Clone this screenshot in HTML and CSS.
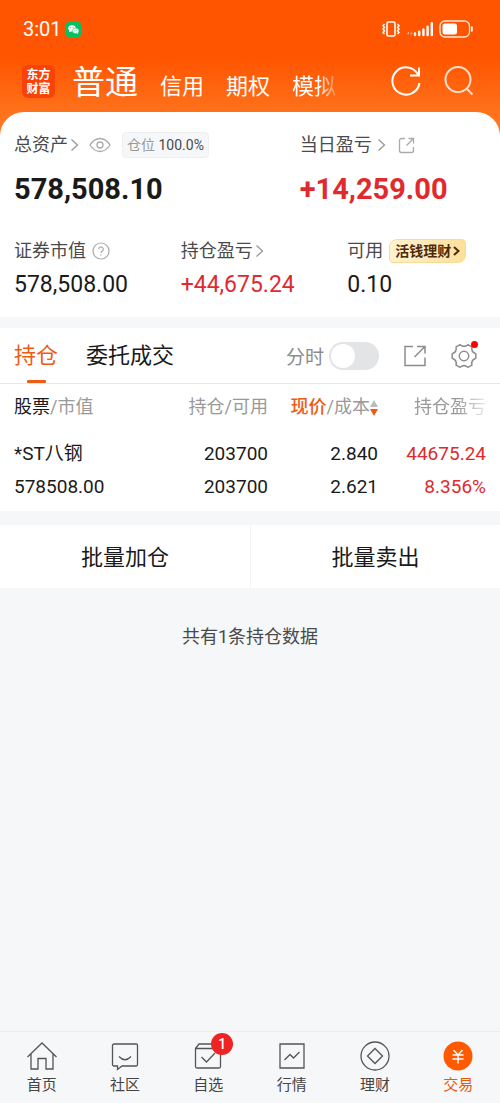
FILE: index.html
```html
<!DOCTYPE html>
<html lang="zh-CN">
<head>
    <meta charset="UTF-8">
    <meta name="viewport" content="width=device-width, initial-scale=1.0">
    <title>交易 - 持仓</title>
    <link rel="stylesheet" href="styles.css">
</head>
<body>

<header class="header">
    <div class="status-bar">
        <span class="time">3:01</span>
        <svg class="wechat" width="15" height="15" viewBox="0 0 15 15">
            <rect width="15" height="15" rx="3" fill="#07c160"/>
            <ellipse cx="6" cy="6.3" rx="3.7" ry="3.1" fill="#fff"/>
            <path d="M3.5 8l-.4 2.2 2.3-1z" fill="#fff"/>
            <ellipse cx="9.6" cy="8.8" rx="3.3" ry="2.7" fill="#fff" stroke="#07c160" stroke-width=".5"/>
            <path d="M10.5 11l1.6.9-.2-1.7z" fill="#fff"/>
            <g fill="#07c160"><circle cx="4.8" cy="5.6" r=".5"/><circle cx="7.2" cy="5.6" r=".5"/><circle cx="8.6" cy="8.2" r=".4"/><circle cx="10.7" cy="8.2" r=".4"/></g>
        </svg>
        <div class="status-icons">
            <svg width="20" height="18" viewBox="0 0 20 18" fill="none" stroke="#fff">
                <rect x="6" y="2" width="8" height="14" rx="1.5" stroke-width="1.6"/>
                <path d="M3.5 4l-1.5 1.7 1.5 1.7L2 9l1.5 1.7L2 12.4l1.5 1.7M16.5 4L18 5.7l-1.5 1.7L18 9l-1.5 1.7 1.5 1.7-1.5 1.7" stroke-width="1.5"/>
            </svg>
            <svg width="28" height="18" viewBox="0 0 28 18" fill="none" stroke="#fff" stroke-width="2.4" stroke-linecap="round">
                <path d="M2.5 14V12.5M2.5 12.5L1 14M5 12v2.5L6.2 13" stroke-width=".8" opacity=".5"/>
                <path d="M9 15v-1.5M13.2 15v-3.2M17.4 15V9.4M21.6 15V6.6M25.8 15V3.2"/>
            </svg>
            <svg width="34" height="18" viewBox="0 0 34 18" fill="none">
                <rect x="1" y="1" width="29.5" height="16" rx="5" stroke="#fff" stroke-width="1.3" opacity=".85"/>
                <rect x="3.5" y="3.5" width="14.5" height="11" rx="2.5" fill="#fff"/>
                <path d="M32.8 7.2v3.6" stroke="#fff" stroke-width="1.8" stroke-linecap="round"/>
            </svg>
        </div>
    </div>
    <div class="nav-row">
        <a class="logo" href="#">东方<br>财富</a>
        <nav class="account-nav">
            <a class="current" href="#">普通</a>
            <a href="#">信用</a>
            <a href="#">期权</a>
            <a class="fade" href="#">模拟</a>
        </nav>
        <button class="icon-btn" type="button" aria-label="刷新">
            <svg width="30" height="30" viewBox="0 0 30 30" fill="none" stroke="#fff" stroke-width="2">
                <path d="M28.450 17A13.600 13.600 0 1 1 27 8.600"/>
                <path d="M28 1.500V9.500H19"/>
            </svg>
        </button>
        <button class="icon-btn" type="button" aria-label="搜索">
            <svg width="30" height="30" viewBox="0 0 30 30" fill="none" stroke="#ffe3d0" stroke-width="2">
                <circle cx="14" cy="13.500" r="12.500"/>
                <path d="M22.500 22.500L28.500 28.500"/>
            </svg>
        </button>
    </div>
</header>

<main class="content">
    <section class="assets">
        <div class="asset-top">
            <div class="asset">
                <div class="label">
                    <a href="#">总资产</a>
                    <svg class="chevron" width="9" height="14" viewBox="0 0 9 14"><path d="M1.500 1.500L7.500 7l-6 5.500"/></svg>
                    <svg class="eye" width="22" height="16" viewBox="0 0 22 16" fill="none" stroke="#aaa" stroke-width="1.300">
                        <path d="M1 8C4 3.500 7 1.500 11 1.500S18 3.500 21 8c-3 4.500-6 6.500-10 6.500S4 12.500 1 8z"/>
                        <circle cx="11" cy="8" r="3"/>
                    </svg>
                    <span class="position-tag">仓位 <b>100.0%</b></span>
                </div>
                <div class="total">578,508.10</div>
            </div>
            <div class="asset">
                <div class="label">
                    <a href="#">当日盈亏</a>
                    <svg class="chevron day" width="9" height="14" viewBox="0 0 9 14"><path d="M1.500 1.500L7.500 7l-6 5.500"/></svg>
                    <svg class="share-small" width="17" height="17" viewBox="0 0 17 17" fill="none" stroke="#aaa" stroke-width="1.300">
                        <path d="M7 1.500H3.500a2 2 0 0 0-2 2v10a2 2 0 0 0 2 2h10a2 2 0 0 0 2-2V10M10.500 1.500h5v5M15.500 1.500L8.500 8.500"/>
                    </svg>
                </div>
                <div class="total up">+14,259.00</div>
            </div>
        </div>
        <div class="asset-bottom">
            <div class="asset">
                <div class="label">
                    <span>证券市值</span>
                    <svg class="help" width="18" height="18" viewBox="0 0 18 18" fill="none" stroke="#aaa" stroke-width="1.200">
                        <circle cx="9" cy="9" r="8"/>
                        <path d="M6.700 7.200a2.300 2.300 0 1 1 3.600 1.900C9.400 9.700 9 10 9 11M9 12.300v1.300"/>
                    </svg>
                </div>
                <div class="amount">578,508.00</div>
            </div>
            <div class="asset">
                <div class="label">
                    <a href="#">持仓盈亏</a>
                    <svg class="chevron" width="9" height="14" viewBox="0 0 9 14"><path d="M1.500 1.500L7.500 7l-6 5.500"/></svg>
                </div>
                <div class="amount up">+44,675.24</div>
            </div>
            <div class="asset">
                <div class="label">
                    <span>可用</span>
                    <a class="promo" href="#">活钱理财<svg width="7" height="10" viewBox="0 0 7 10" fill="none" stroke="#4d2a0c" stroke-width="2"><path d="M1 1l4.500 4L1 9"/></svg></a>
                </div>
                <div class="amount">0.10</div>
            </div>
        </div>
    </section>

    <section class="holdings">
        <div class="toolbar">
            <a class="tab active" href="#">持仓</a>
            <a class="tab" href="#">委托成交</a>
            <label class="switch-label" for="minute">分时</label>
            <input class="switch" type="checkbox" id="minute">
            <button class="icon-btn share" type="button" aria-label="分享">
                <svg width="22" height="22" viewBox="0 0 22 22" fill="none" stroke="#8c8c8c" stroke-width="1.500">
                    <path d="M9 1.500H1v19h20V12.500M13 1.500h8v7M21 1.500L10.500 12"/>
                </svg>
            </button>
            <button class="icon-btn settings" type="button" aria-label="设置">
                <svg width="26" height="26" viewBox="0 0 26 26" fill="none" stroke="#8c8c8c" stroke-width="1.500" stroke-linejoin="round">
                    <path d="M24.800 10.700V15.300Q19.900 17 20.900 22.100L16.900 24.300Q13 21 9.100 24.300L5.100 22.100Q6.100 17 1.200 15.300V10.700Q6.100 9 5.100 3.900L9.100 1.700Q13 5 16.900 1.700L20.900 3.900Q19.900 9 24.800 10.700z"/>
                    <circle cx="13" cy="13" r="4.700"/>
                </svg>
                <span class="dot"></span>
            </button>
        </div>

        <table class="stocks">
            <thead>
                <tr>
                    <th><span class="strong">股票</span>/市值</th>
                    <th>持仓/可用</th>
                    <th><span class="sorted">现价</span>/成本<svg class="sort" width="8" height="16" viewBox="0 0 8 16"><path d="M4 0l4 7H0z" fill="#bbb"/><path d="M4 16L0 9h8z" fill="#f05a14"/></svg></th>
                    <th><span class="fade">持仓盈亏</span></th>
                </tr>
            </thead>
            <tbody>
                <tr>
                    <td>*ST八钢<br>578508.00</td>
                    <td>203700<br>203700</td>
                    <td>2.840<br>2.621</td>
                    <td class="up">44675.24<br>8.356%</td>
                </tr>
            </tbody>
        </table>
    </section>

    <div class="batch">
        <button type="button">批量加仓</button>
        <button type="button">批量卖出</button>
    </div>

    <p class="summary">共有1条持仓数据</p>
</main>

<nav class="tabbar">
    <a href="#">
        <svg width="32" height="30" viewBox="0 0 32 30">
            <path d="M1.500 16L16 2l14.500 14M5 13v15h7V17.500h8V28h7V13"/>
        </svg>
        首页
    </a>
    <a href="#">
        <svg width="32" height="30" viewBox="0 0 32 30">
            <path d="M5 3h22a1.500 1.500 0 0 1 1.500 1.500v19A1.500 1.500 0 0 1 27 25H13l-4.500 3.500V25H5a1.500 1.500 0 0 1-1.500-1.500v-19A1.500 1.500 0 0 1 5 3zM10 15.500q6 6.500 12 0"/>
        </svg>
        社区
    </a>
    <a href="#">
        <svg width="32" height="30" viewBox="0 0 32 30">
            <path d="M3.500 7.500h25v18a1.500 1.500 0 0 1-1.500 1.500H5a1.500 1.500 0 0 1-1.500-1.500zM3.500 7.500L7 3h18l3.500 4.500M9.500 16l5 5 8.500-9"/>
        </svg>
        自选
        <span class="badge">1</span>
    </a>
    <a href="#">
        <svg width="32" height="30" viewBox="0 0 32 30">
            <path d="M4 3h24v24H4zM8.500 19l5.500-5.500 3.500 3.500 6-6"/>
        </svg>
        行情
    </a>
    <a href="#">
        <svg width="32" height="30" viewBox="0 0 32 30">
            <circle cx="16" cy="15" r="14"/>
            <path d="M16 7.500l7.500 7.500-7.500 7.500L8.500 15z"/>
        </svg>
        理财
    </a>
    <a class="active" href="#">
        <svg width="32" height="30" viewBox="0 0 32 30">
            <circle class="disc" cx="16" cy="15" r="14.500"/>
            <path class="yen" d="M11.500 9l4.500 5 4.500-5M10.500 14h11M10.500 18h11M16 14v8.500"/>
        </svg>
        交易
    </a>
</nav>

</body>
</html>
```
FILE: styles.css
```css
* {
    box-sizing: border-box;
}

body {
    margin: 0;
    min-height: 100vh;
    display: flex;
    flex-direction: column;
    background-color: #f6f7f9;
    color: #1a1a1a;
    font-family: Roboto, "Noto Sans CJK SC", sans-serif;
    font-size: 18px;
}

a {
    color: inherit;
    text-decoration: none;
}

button {
    font: inherit;
    color: inherit;
    border: 0;
    padding: 0;
    background: none;
}

svg {
    display: block;
    flex: none;
}

.up {
    color: #e02a2e;
}

.fade {
    -webkit-mask-image: linear-gradient(to right, #000 60%, transparent 110%);
    mask-image: linear-gradient(to right, #000 60%, transparent 110%);
}

/* header */
.header {
    padding-bottom: 32px;
    background: linear-gradient(#ff5500 40%, #ff7a24 90%);
    color: #fff;
}

.status-bar {
    display: flex;
    align-items: center;
    height: 58px;
    padding: 0 27px 0 23px;
}

.time {
    font-size: 20px;
}

.wechat {
    margin-left: 4px;
}

.status-icons {
    display: flex;
    align-items: center;
    gap: 5px;
    margin-left: auto;
}

.nav-row {
    display: flex;
    align-items: center;
    height: 46px;
    margin-bottom: 8px;
    padding: 0 26px 0 22px;
    gap: 23px;
}

.logo {
    width: 33px;
    height: 33px;
    padding-top: 3px;
    border-radius: 6px;
    background-color: #f9420a;
    font-size: 12px;
    font-weight: bold;
    line-height: 14px;
    text-align: center;
}

.account-nav {
    display: flex;
    align-items: baseline;
    gap: 22px;
    flex: 1;
    margin-left: -6px;
    padding-top: 8px;
    font-size: 22px;
    line-height: 46px;
}

.account-nav .current {
    font-size: 33px;
}

.icon-btn {
    position: relative;
    flex: none;
}

/* assets card, overlaps the end of the header */
.content {
    margin-top: -32px;
}

.assets {
    padding: 20px 0 15px;
    border-radius: 24px 24px 0 0;
    background-color: #fff;
}

.asset-top {
    display: grid;
    grid-template-columns: 4fr 3fr;
    margin-bottom: 31px;
}

.asset-bottom {
    display: grid;
    grid-template-columns: repeat(3, 1fr);
}

.asset {
    padding-left: 14px;
}

.label {
    display: flex;
    align-items: center;
    height: 26px;
    color: #4a4a4a;
    line-height: 26px;
    white-space: nowrap;
}

.chevron {
    margin-left: 2px;
    fill: none;
    stroke: #999;
    stroke-width: 1.3;
}

.chevron.day {
    margin-left: 5px;
}

.eye {
    margin-left: 10px;
}

.help {
    margin-left: 6px;
}

.share-small {
    margin-left: 12px;
}

.position-tag {
    margin-left: 11px;
    padding: 0 4px;
    border: 1px solid #eeeff1;
    border-radius: 4px;
    background-color: #f6f7f9;
    color: #999;
    font-size: 14px;
    line-height: 24px;
}

.position-tag b {
    color: #4a4a4a;
    font-weight: normal;
}

.promo {
    display: flex;
    align-items: center;
    gap: 2px;
    height: 24px;
    margin-left: 6px;
    padding: 0 5px;
    border: 1px solid #f7dc95;
    border-radius: 8px 4px;
    background: linear-gradient(to right, #fff3d0, #fce09a);
    color: #4d2a0c;
    font-size: 14px;
    font-weight: bold;
}

.total {
    margin-top: 13px;
    font-size: 29px;
    font-weight: bold;
    line-height: 36px;
}

.amount {
    margin-top: 4px;
    font-size: 23px;
    line-height: 34px;
}

/* holdings */
.holdings {
    margin-top: 11px;
    padding-bottom: 8px;
    background-color: #fff;
}

.toolbar {
    display: flex;
    align-items: center;
    height: 56px;
    padding: 0 23px 0 14px;
    border-bottom: 1px solid #e8e8ea;
}

.tab {
    display: flex;
    flex-direction: column;
    align-items: center;
    margin-right: 28px;
    font-size: 22px;
    line-height: 55px;
}

.tab.active {
    color: #ee5c14;
}

.tab.active::after {
    content: "";
    width: 19px;
    height: 3px;
    margin-top: -3px;
    border-radius: 1px;
    background-color: #ee5c14;
}

.switch-label {
    margin-left: auto;
    color: #8c8c8c;
    font-size: 19px;
}

.switch {
    appearance: none;
    width: 50px;
    height: 28px;
    margin: 0 25px 0 5px;
    padding: 2px;
    border-radius: 14px;
    background-color: #e3e4e6;
}

.switch::before {
    content: "";
    display: block;
    width: 24px;
    height: 24px;
    border-radius: 50%;
    background-color: #fff;
}

.switch:checked {
    background-color: #ee5c14;
}

.switch:checked::before {
    margin-left: auto;
}

.settings {
    margin-left: 25px;
}

.dot {
    position: absolute;
    top: -2px;
    right: -1px;
    width: 7px;
    height: 7px;
    border-radius: 50%;
    background-color: #f00;
}

.stocks {
    width: 100%;
    border-collapse: collapse;
    table-layout: fixed;
}

.stocks th, .stocks td {
    padding: 0 2px 0 0;
    text-align: right;
    white-space: nowrap;
}

.stocks th {
    height: 46px;
    padding-bottom: 4px;
    color: #999;
    font-weight: normal;
}

.stocks td {
    padding-top: 7px;
    font-size: 19px;
    line-height: 33px;
}

.stocks th:first-child, .stocks td:first-child {
    width: 32%;
    padding-left: 14px;
    text-align: left;
}

.stocks th:last-child, .stocks td:last-child {
    width: 24%;
    padding-right: 14px;
}

.stocks .strong {
    color: #1a1a1a;
}

.stocks .sorted {
    color: #ee5c14;
    font-weight: 500;
}

.sort {
    display: inline-block;
    vertical-align: -3px;
}

/* batch actions */
.batch {
    display: grid;
    grid-template-columns: 1fr 1fr;
    margin-top: 14px;
    background-color: #fff;
}

.batch button {
    height: 63px;
    padding-bottom: 3px;
    font-size: 22px;
}

.batch button + button {
    border-left: 1px solid #f3f4f6;
}

.summary {
    margin: 36px 0;
    color: #4a4a4a;
    line-height: 26px;
    text-align: center;
}

/* bottom tab bar */
.tabbar {
    display: grid;
    grid-template-columns: repeat(6, 1fr);
    height: 72px;
    margin-top: auto;
    padding-top: 9px;
    border-top: 1px solid #ebecee;
    color: #444;
    font-size: 15px;
    line-height: 28px;
}

.tabbar a {
    position: relative;
    display: flex;
    flex-direction: column;
    align-items: center;
}

.tabbar svg {
    fill: none;
    stroke: #555;
    stroke-width: 1.3;
}

.tabbar .active {
    color: #e8590c;
}

.tabbar .disc {
    fill: #ff5a00;
    stroke: none;
}

.tabbar .yen {
    stroke: #fff;
    stroke-width: 1.5;
}

.badge {
    position: absolute;
    top: -8px;
    left: calc(50% + 3px);
    width: 22px;
    height: 22px;
    border-radius: 50%;
    background-color: #ee2424;
    color: #fff;
    font-size: 14px;
    font-weight: 500;
    line-height: 22px;
    text-align: center;
}
```
